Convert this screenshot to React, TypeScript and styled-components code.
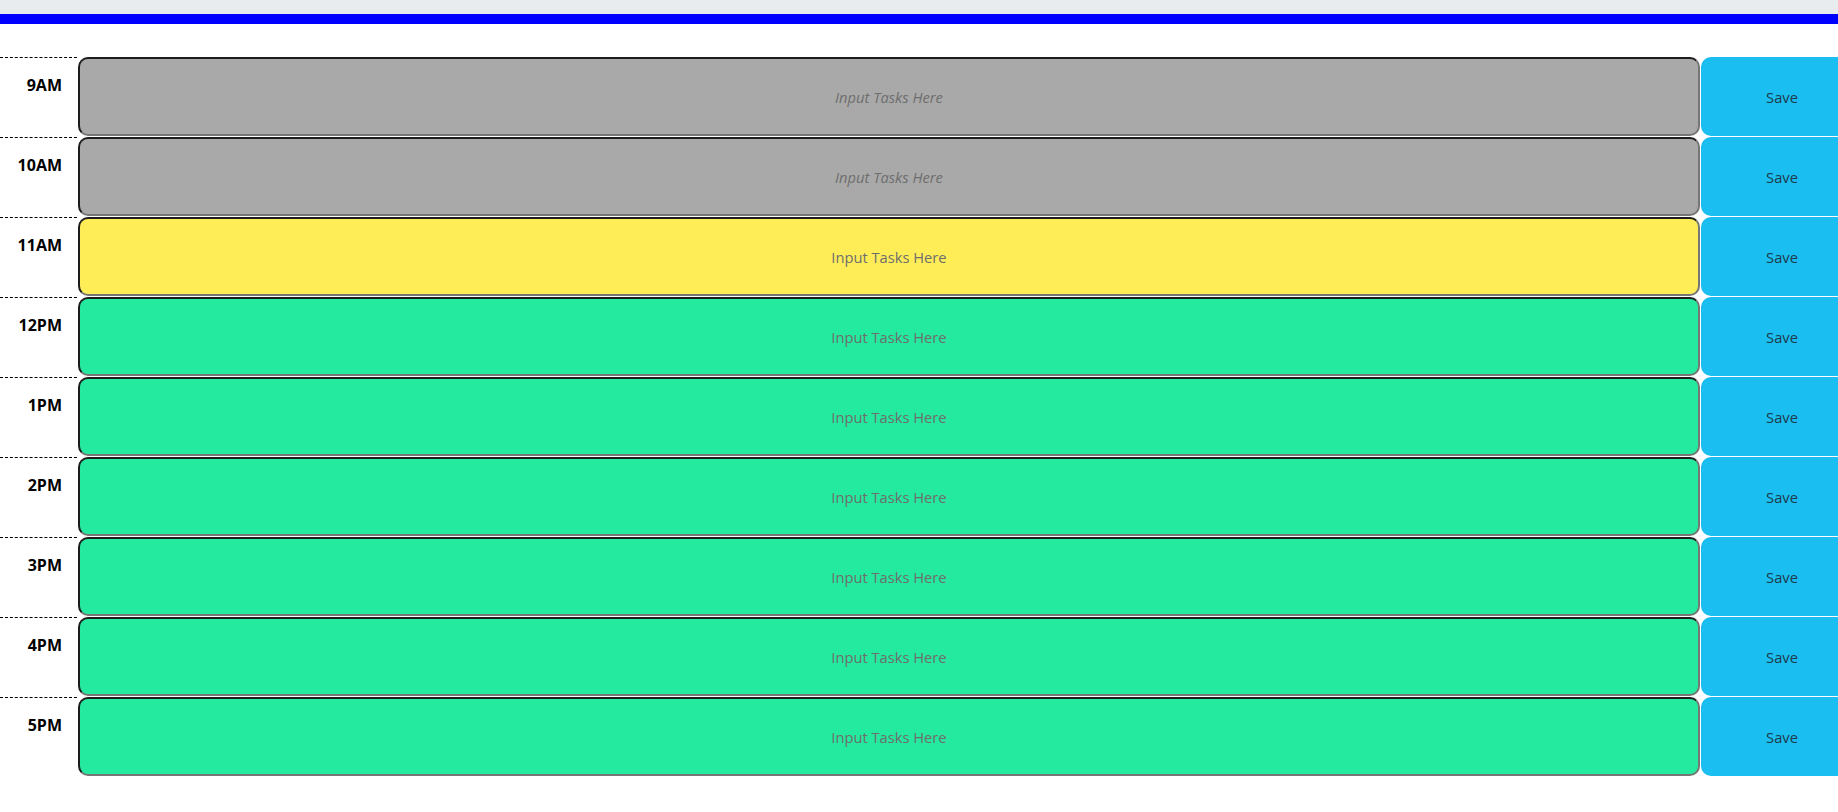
import React from 'react';
import styled, { createGlobalStyle } from 'styled-components';

const GlobalStyle = createGlobalStyle`
  html, body {
    margin: 0;
    padding: 0;
    overflow-x: hidden;
    background: #ffffff;
    font-family: 'Open Sans', 'Liberation Sans', sans-serif;
  }
`;

const Header = styled.header`
  height: 14px;
  background: #e9ecef;
  border-bottom: 10px solid #0000ff;
`;

const Schedule = styled.main`
  width: calc(100% + 25px);
  padding-top: 33px;
`;

const Row = styled.div`
  display: grid;
  grid-template-columns: 77px 1fr 162px;
  column-gap: 1px;
  height: 80px;
`;

const Hour = styled.div`
  box-sizing: border-box;
  border-top: 1px dashed #000000;
  padding: 16px 15px 0 0;
  text-align: right;
  font-size: 16px;
  font-weight: 700;
  color: #000000;
`;

type Status = 'past' | 'present' | 'future';

const colors: Record<Status, string> = {
  past: '#a9a9a9',
  present: '#ffed57',
  future: '#23ea9e',
};

const Task = styled.textarea<{ $status: Status }>`
  box-sizing: border-box;
  height: 79px;
  margin: 0;
  padding: 28px 10px 0;
  resize: none;
  border-radius: 10px;
  border: 2px solid;
  border-color: #1c1c1c #767676 #767676 #1c1c1c;
  background: ${p => colors[p.$status]};
  font-family: 'Open Sans', 'Liberation Sans', sans-serif;
  font-size: 14.7px;
  line-height: 20px;
  text-align: center;
  color: #000000;
  outline: none;

  &::placeholder {
    color: #6e6e6e;
    font-style: ${p => (p.$status === 'past' ? 'italic' : 'normal')};
  }
`;

const SaveBtn = styled.button`
  box-sizing: border-box;
  height: 79px;
  border: none;
  border-radius: 10px;
  padding-top: 2px;
  background: #1abef0;
  color: #1f3a4e;
  font-family: 'Open Sans', 'Liberation Sans', sans-serif;
  font-size: 14.7px;
  cursor: pointer;
`;

const hours: { label: string; status: Status }[] = [
  { label: '9AM', status: 'past' },
  { label: '10AM', status: 'past' },
  { label: '11AM', status: 'present' },
  { label: '12PM', status: 'future' },
  { label: '1PM', status: 'future' },
  { label: '2PM', status: 'future' },
  { label: '3PM', status: 'future' },
  { label: '4PM', status: 'future' },
  { label: '5PM', status: 'future' },
];

const App: React.FC = () => {
  return (
    <>
      <GlobalStyle />
      <Header />
      <Schedule>
        {hours.map(h => (
          <Row key={h.label}>
            <Hour>{h.label}</Hour>
            <Task $status={h.status} placeholder="Input Tasks Here" />
            <SaveBtn>Save</SaveBtn>
          </Row>
        ))}
      </Schedule>
    </>
  );
};

export default App;
